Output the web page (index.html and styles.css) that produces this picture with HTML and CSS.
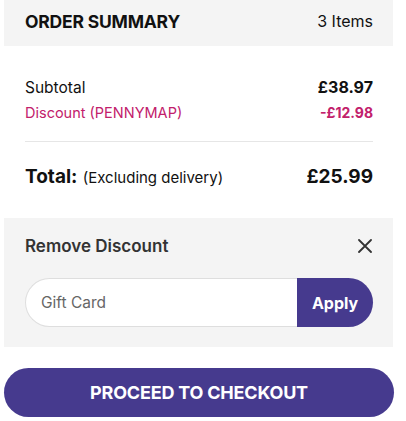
FILE: index.html
```html
<!DOCTYPE html>
<html>
<head>
<meta charset="utf-8">
<link rel="stylesheet" href="styles.css">
</head>
<body>
<div class="page">
  <div class="card">
    <div class="head">
      <span class="title">ORDER SUMMARY</span>
      <span class="count">3 Items</span>
    </div>
    <div class="summary">
      <div class="row subtotal"><span>Subtotal</span><span class="amt">£38.97</span></div>
      <div class="row discount"><span>Discount (PENNYMAP)</span><span class="amt">-£12.98</span></div>
      <div class="divider"></div>
      <div class="row total"><span><b>Total:</b> <span class="excl">(Excluding delivery)</span></span><span class="amt">£25.99</span></div>
    </div>
    <div class="promo">
      <div class="promo-head">
        <span>Remove Discount</span>
        <svg class="close" width="14" height="14" viewBox="0 0 14 14"><path d="M1 1L13 13M13 1L1 13" stroke="#333" stroke-width="1.8" stroke-linecap="round"/></svg>
      </div>
      <div class="field">
        <input class="input" type="text" placeholder="Gift Card">
        <button class="apply">Apply</button>
      </div>
    </div>
  </div>
  <button class="checkout">PROCEED TO CHECKOUT</button>
</div>
</body>
</html>
```
FILE: styles.css
```css
* { box-sizing: border-box; }
body { margin: 0; background: #fff; font-family: Inter, "Noto Sans", sans-serif; color: #111; }
.page { width: 390px; margin-left: 4px; display: flex; flex-direction: column; }
.card { width: 389px; display: flex; flex-direction: column; }
.head { height: 46px; background: #f4f4f4; display: flex; align-items: center; justify-content: space-between; padding: 0 20px 4px 21px; }
.title { font-weight: 700; font-size: 17.5px; letter-spacing: -0.2px; }
.count { font-size: 16px; }
.summary { height: 172px; padding: 29px 20px 0 21px; display: flex; flex-direction: column; }
.row { display: flex; justify-content: space-between; align-items: center; }
.subtotal { font-size: 15.5px; height: 24px; }
.subtotal .amt { font-weight: 700; font-size: 16px; }
.discount { font-size: 14.5px; color: #c2206b; height: 24px; margin-top: 1px; }
.discount .amt { font-weight: 700; font-size: 14px; }
.divider { height: 1px; background: #e6e6e6; margin-top: 17px; }
.total { margin-top: 21px; height: 26px; font-size: 19px; }
.total b { font-weight: 700; }
.excl { font-size: 15px; }
.total .amt { font-weight: 700; font-size: 19px; }
.promo { background: #f4f4f4; padding: 17px 20px 20px 21px; display: flex; flex-direction: column; }
.promo-head { display: flex; justify-content: space-between; align-items: center; height: 22px; font-size: 17px; font-weight: 600; color: #333; }
.close { margin-right: 1px; }
.field { display: flex; margin-top: 21px; height: 49px; }
.input { flex: 1; min-width: 0; height: 49px; border: 1px solid #dedede; border-right: none; border-radius: 25px 0 0 25px; background: #fff; padding: 0 15px; font-family: inherit; font-size: 15.5px; color: #333; outline: none; }
.input::placeholder { color: #666; }
.apply { width: 76px; height: 49px; border: none; border-radius: 0 25px 25px 0; background: #463a8e; color: #fff; font-family: inherit; font-weight: 700; font-size: 16px; padding: 0; }
.checkout { margin-top: 21px; width: 390px; height: 49px; border: none; border-radius: 25px; background: #463a8e; color: #fff; font-family: inherit; font-weight: 700; font-size: 18px; letter-spacing: -0.2px; }
```
